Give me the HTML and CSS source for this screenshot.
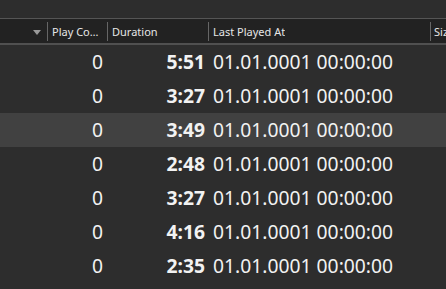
FILE: index.html
```html
<!DOCTYPE html>
<html>
<head>
<meta charset="utf-8">
<link rel="stylesheet" href="styles.css">
</head>
<body>
<div class="view">
  <div class="topbar"></div>
  <div class="header">
    <div class="hcell c1"><span class="arrow"></span></div>
    <div class="sep"></div>
    <div class="hcell c2"><span class="htext">Play Count</span></div>
    <div class="sep"></div>
    <div class="hcell c3"><span class="htext">Duration</span></div>
    <div class="sep"></div>
    <div class="hcell c4"><span class="htext">Last Played At</span></div>
    <div class="sep"></div>
    <div class="hcell c5"><span class="htext">Size</span></div>
  </div>
  <div class="rows">
    <div class="row"><div class="c1"></div><div class="cnt">0</div><div class="dur">5:51</div><div class="date">01.01.0001 00:00:00</div></div>
    <div class="row"><div class="c1"></div><div class="cnt">0</div><div class="dur">3:27</div><div class="date">01.01.0001 00:00:00</div></div>
    <div class="row sel"><div class="c1"></div><div class="cnt">0</div><div class="dur">3:49</div><div class="date">01.01.0001 00:00:00</div></div>
    <div class="row"><div class="c1"></div><div class="cnt">0</div><div class="dur">2:48</div><div class="date">01.01.0001 00:00:00</div></div>
    <div class="row"><div class="c1"></div><div class="cnt">0</div><div class="dur">3:27</div><div class="date">01.01.0001 00:00:00</div></div>
    <div class="row"><div class="c1"></div><div class="cnt">0</div><div class="dur">4:16</div><div class="date">01.01.0001 00:00:00</div></div>
    <div class="row"><div class="c1"></div><div class="cnt">0</div><div class="dur">2:35</div><div class="date">01.01.0001 00:00:00</div></div>
  </div>
</div>
</body>
</html>
```
FILE: styles.css
```css
html, body {
  margin: 0;
  padding: 0;
  background: #2d2d2d;
  overflow: hidden;
}
.view {
  width: 446px;
  height: 289px;
  overflow: hidden;
  font-family: "Noto Sans", "Open Sans", sans-serif;
  color: #f2f2f2;
}
.topbar {
  height: 18px;
  background: #2d2d2d;
}
.header {
  display: flex;
  height: 24px;
  background: #222222;
  border-top: 1px solid #555555;
  border-bottom: 2px solid #505050;
  align-items: center;
  font-size: 11px;
  color: #e6e6e6;
  white-space: nowrap;
}
.hcell {
  height: 100%;
  display: flex;
  flex: none;
  align-items: center;
  overflow: hidden;
  box-sizing: border-box;
  padding-left: 4px;
}
.htext {
  overflow: hidden;
  text-overflow: ellipsis;
  white-space: nowrap;
  display: block;
}
.header .c1 { width: 47px; justify-content: flex-end; padding-right: 6px; }
.header .c2 { width: 59px; padding-right: 2px; }
.header .c3 { width: 100px; }
.header .c4 { width: 221px; }
.header .c5 { width: 40px; padding-left: 3px; }
.sep {
  width: 1px;
  height: 19px;
  background: #666666;
  flex: none;
}
.arrow {
  width: 0;
  height: 0;
  border-left: 4.5px solid transparent;
  border-right: 4.5px solid transparent;
  border-top: 5px solid #9a9a9a;
  margin-top: 2px;
}
.rows {
  display: flex;
  flex-direction: column;
}
.row {
  display: grid;
  grid-template-columns: 48px 60px 101px 1fr;
  height: 34px;
  line-height: 34px;
  font-size: 19.3px;
  white-space: nowrap;
}
.row.sel {
  background: #414141;
}
.cnt {
  text-align: right;
  padding-right: 5px;
}
.dur {
  text-align: right;
  padding-right: 4px;
  font-weight: bold;
}
.date {
  padding-left: 4px;
}
```
